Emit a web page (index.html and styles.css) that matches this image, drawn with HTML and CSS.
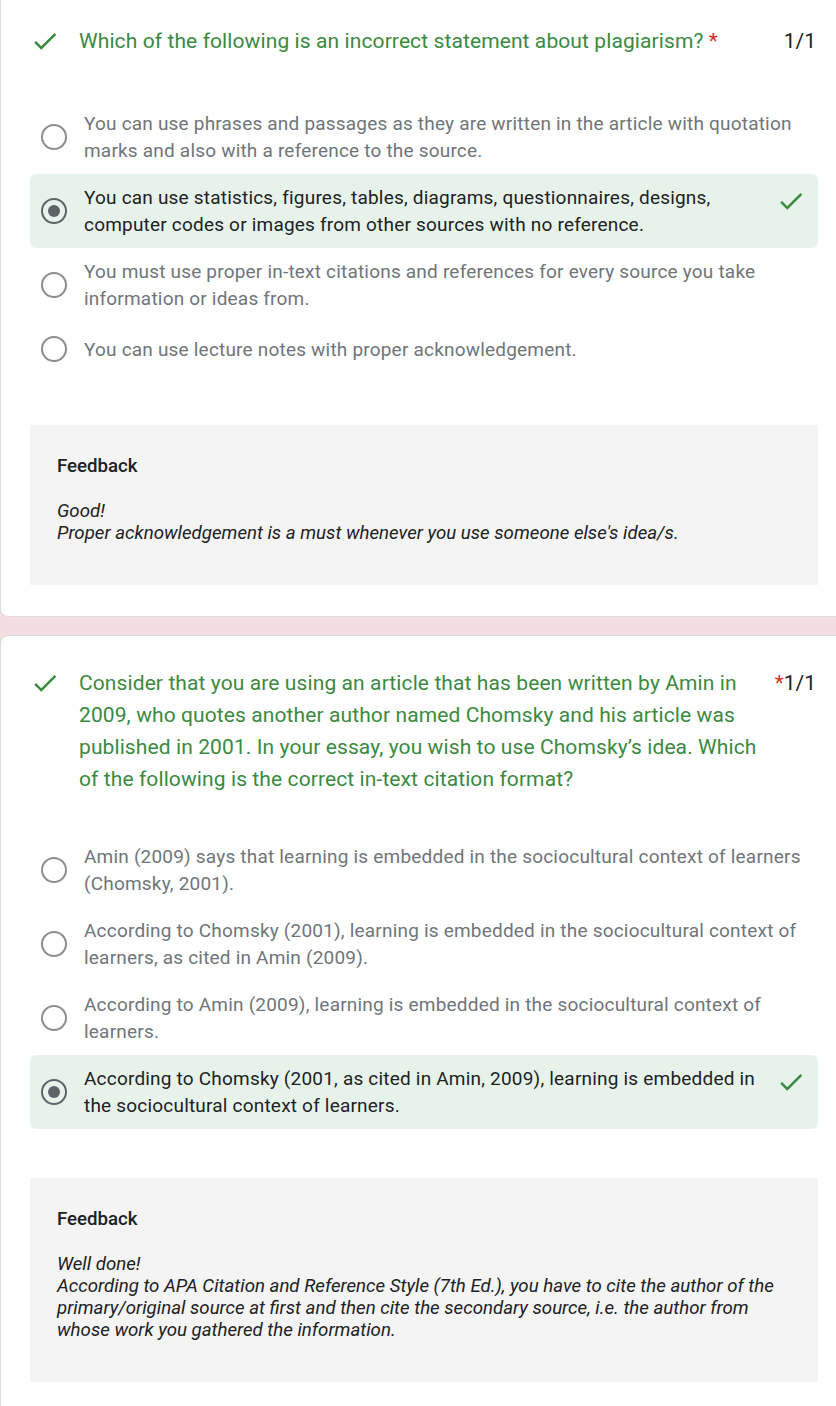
FILE: index.html
```html
<!DOCTYPE html>
<html lang="en">
<head>
<meta charset="utf-8">
<title>Quiz results</title>
<link rel="stylesheet" href="styles.css">
</head>
<body>
<section class="card card--first">
  <div class="q-head">
    <div class="q-icon">
      <svg viewBox="0 0 24 24" width="30" height="30"><path d="M9 16.17L4.83 12l-1.42 1.41L9 19 21 7l-1.41-1.41z" fill="#3a8a3f"/></svg>
    </div>
    <div class="q-title">Which of the following is an incorrect statement about plagiarism? <span class="req">*</span></div>
    <div class="q-score">1/1</div>
  </div>
  <div class="options">
    <div class="opt">
      <span class="radio"></span>
      <span class="opt-text">You can use phrases and passages as they are written in the article with quotation marks and also with a reference to the source.</span>
    </div>
    <div class="opt opt--correct">
      <span class="radio radio--on"></span>
      <span class="opt-text">You can use statistics, figures, tables, diagrams, questionnaires, designs, computer codes or images from other sources with no reference.</span>
      <svg class="opt-check" viewBox="0 0 24 24" width="30" height="30"><path d="M9 16.17L4.83 12l-1.42 1.41L9 19 21 7l-1.41-1.41z" fill="#3a8a3f"/></svg>
    </div>
    <div class="opt">
      <span class="radio"></span>
      <span class="opt-text">You must use proper in-text citations and references for every source you take information or ideas from.</span>
    </div>
    <div class="opt">
      <span class="radio"></span>
      <span class="opt-text">You can use lecture notes with proper acknowledgement.</span>
    </div>
  </div>
  <div class="feedback">
    <div class="fb-title">Feedback</div>
    <div class="fb-body">Good!<br>Proper acknowledgement is a must whenever you use someone else's idea/s.</div>
  </div>
</section>

<section class="card">
  <div class="q-head">
    <div class="q-icon">
      <svg viewBox="0 0 24 24" width="30" height="30"><path d="M9 16.17L4.83 12l-1.42 1.41L9 19 21 7l-1.41-1.41z" fill="#3a8a3f"/></svg>
    </div>
    <div class="q-title">Consider that you are using an article that has been written by Amin in 2009, who quotes another author named Chomsky and his article was published in 2001. In your essay, you wish to use Chomsky’s idea. Which of the following is the correct in-text citation format?</div>
    <div class="q-score"><span class="req">*</span>1/1</div>
  </div>
  <div class="options">
    <div class="opt">
      <span class="radio"></span>
      <span class="opt-text">Amin (2009) says that learning is embedded in the sociocultural context of learners (Chomsky, 2001).</span>
    </div>
    <div class="opt">
      <span class="radio"></span>
      <span class="opt-text">According to Chomsky (2001), learning is embedded in the sociocultural context of learners, as cited in Amin (2009).</span>
    </div>
    <div class="opt">
      <span class="radio"></span>
      <span class="opt-text">According to Amin (2009), learning is embedded in the sociocultural context of learners.</span>
    </div>
    <div class="opt opt--correct">
      <span class="radio radio--on"></span>
      <span class="opt-text">According to Chomsky (2001, as cited in Amin, 2009), learning is embedded in the sociocultural context of learners.</span>
      <svg class="opt-check" viewBox="0 0 24 24" width="30" height="30"><path d="M9 16.17L4.83 12l-1.42 1.41L9 19 21 7l-1.41-1.41z" fill="#3a8a3f"/></svg>
    </div>
  </div>
  <div class="feedback">
    <div class="fb-title">Feedback</div>
    <div class="fb-body">Well done!<br>According to APA Citation and Reference Style (7th Ed.), you have to cite the author of the primary/original source at first and then cite the secondary source, i.e. the author from whose work you gathered the information.</div>
  </div>
</section>
</body>
</html>
```

FILE: styles.css
```css
html, body {
  margin: 0;
  padding: 0;
}
body {
  background: #f4dee1;
  font-family: Roboto, "Liberation Sans", Arial, sans-serif;
  color: #202124;
  overflow-x: hidden;
}
.card {
  background: #fff;
  border: 1px solid #dadce0;
  border-right: none;
  border-radius: 8px 0 0 8px;
  padding: 31px 18px 31px 29px;
  margin-bottom: 18px;
}
.card--first {
  border-top: none;
  border-radius: 0 0 0 8px;
  padding-top: 25px;
}
.q-head {
  display: flex;
  align-items: flex-start;
  min-height: 37px;
  margin-bottom: 38px;
}
.q-icon {
  width: 49px;
  height: 32px;
  display: flex;
  align-items: center;
  flex: none;
}
.q-icon svg {
  display: block;
}
.q-title {
  flex: 1;
  font-size: 21px;
  letter-spacing: 0.1px;
  line-height: 32px;
  color: #3a8a3f;
}
.req {
  color: #d93025;
}
.q-score {
  flex: none;
  margin-left: 8px;
  margin-right: 2px;
  font-size: 21px;
  line-height: 32px;
  color: #202124;
}
.options {
  display: flex;
  flex-direction: column;
}
.opt {
  display: flex;
  align-items: center;
  min-height: 54px;
  box-sizing: border-box;
  padding: 10px 8px 10px 11px;
  border-radius: 6px;
}
.opt--correct {
  background: #e7f3ea;
}
.radio {
  flex: none;
  width: 26px;
  height: 26px;
  box-sizing: border-box;
  border: 2px solid #8a8d91;
  border-radius: 50%;
  margin-right: 17px;
  display: flex;
  align-items: center;
  justify-content: center;
}
.radio--on {
  border-color: #5f6368;
}
.radio--on::after {
  content: "";
  width: 12px;
  height: 12px;
  border-radius: 50%;
  background: #5f6368;
}
.opt-text {
  flex: 1;
  font-size: 19px;
  letter-spacing: 0.2px;
  line-height: 27px;
  color: #70757a;
}
.opt--correct .opt-text {
  color: #202124;
}
.opt-check {
  flex: none;
  align-self: flex-start;
  margin-top: 2px;
  margin-left: 8px;
  margin-right: 4px;
  display: block;
}
.feedback {
  margin-top: 49px;
  background: #f4f4f4;
  padding: 30px 27px 41px 27px;
}
.fb-title {
  font-size: 18.67px;
  font-weight: 500;
  line-height: 22px;
  color: #202124;
  margin-bottom: 23px;
}
.fb-body {
  font-size: 18.67px;
  font-style: italic;
  line-height: 22px;
  color: #202124;
}
```
